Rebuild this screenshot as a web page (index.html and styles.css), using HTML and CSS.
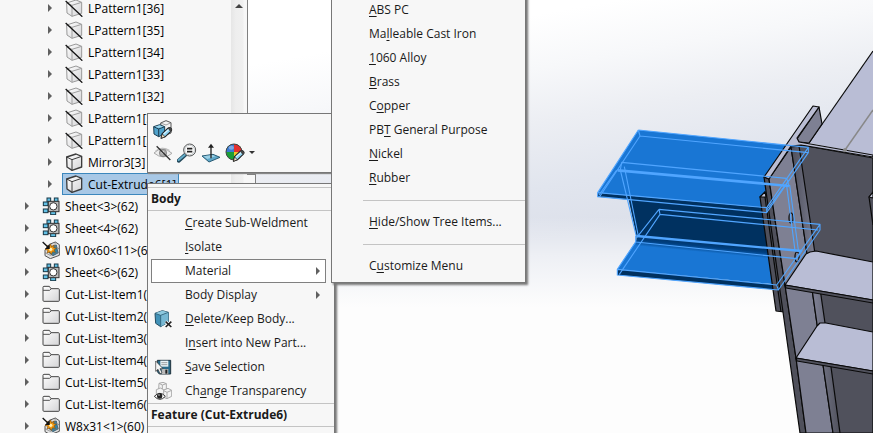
FILE: index.html
```html
<!DOCTYPE html>
<html lang="en">
<head>
<meta charset="utf-8">
<title>Cut-Extrude6 - Feature Tree</title>
<link rel="stylesheet" href="styles.css">
</head>
<body>
<svg class="defs" aria-hidden="true">
  <defs>
    <linearGradient id="steel" x1="0" y1="0" x2="1" y2="1"><stop offset="0" stop-color="#fff"/><stop offset="1" stop-color="#d4d4d6"/></linearGradient>
    <linearGradient id="fillet" x1="0" x2="1" y1="0" y2="0"><stop offset="0" stop-color="#4d4e5a"/><stop offset=".5" stop-color="#7b7d90"/><stop offset="1" stop-color="#50515c"/></linearGradient>
    <linearGradient id="bend" gradientUnits="userSpaceOnUse" x1="350" y1="605" x2="347" y2="636"><stop offset="0" stop-color="#003263"/><stop offset=".45" stop-color="#003f80"/><stop offset="1" stop-color="#1976d4"/></linearGradient>
    <symbol id="arrow" viewBox="0 0 4 8"><path d="M0 0L4 4L0 8Z" fill="#606060"/></symbol>
    <symbol id="cube-off" viewBox="0 0 54 54">
      <path d="M5 12L33 3L50 10V43L21 52L6 42Z" fill="url(#steel)" stroke="#999" stroke-width="3" stroke-linejoin="round"/>
      <path d="M5 12L21 19L50 10M21 19V52" fill="none" stroke="#a0a0a0" stroke-width="3"/>
      <path d="M2 6L52 53" stroke="#111" stroke-width="4"/>
    </symbol>
    <symbol id="cube" viewBox="0 0 54 54">
      <path d="M5 12L33 3L50 10V42L21 52L6 42Z" fill="url(#steel)" stroke="#3c3c3c" stroke-width="4" stroke-linejoin="round"/>
      <path d="M5 12L21 20L50 10M21 20V52" fill="none" stroke="#3c3c3c" stroke-width="3"/>
    </symbol>
    <symbol id="sheet" viewBox="0 0 54 54">
      <g fill="#63c1e6" stroke="#163746" stroke-width="3"><rect x="15" y="3" width="11" height="12"/><rect x="37" y="3" width="11" height="12"/><rect x="4" y="15" width="14" height="11"/><rect x="4" y="36" width="14" height="11"/><rect x="26" y="43" width="15" height="10"/></g>
      <rect x="19" y="13" width="32" height="31" fill="#bcbcbc" stroke="#333" stroke-width="3"/>
      <circle cx="34" cy="28" r="11" fill="#fff" stroke="#333" stroke-width="3"/>
    </symbol>
    <symbol id="weld" viewBox="0 0 54 54">
      <path d="M22 10L40 3L52 11V43L25 53L9 44V27Z" fill="#e2e2e2" stroke="#555" stroke-width="3" stroke-linejoin="round"/>
      <path d="M27 17L43 12L48 36L33 44L22 36Z" fill="#2f83a8" stroke="#29495a" stroke-width="2"/>
      <path d="M40 3L38 16L52 24M9 35L25 43L52 33" fill="none" stroke="#777" stroke-width="2"/>
      <path d="M26 9L29 17L36 12L35 20L43 22L36 27L40 34L32 32L28 40L23 33L15 36L18 28L9 25L17 21L14 13L22 17Z" fill="#f39a13" stroke="#88520a" stroke-width="2"/>
      <circle cx="26" cy="25" r="5" fill="#fff0b5"/>
      <path d="M2 3L20 20" stroke="#111" stroke-width="4"/><path d="M23 10V24H9Z" fill="#111"/>
    </symbol>
    <symbol id="folder" viewBox="0 0 54 54">
      <path d="M3 7Q3 4 6 4H22L27 11H49Q52 11 52 14V47Q52 49 49 49H6Q3 49 3 46Z" fill="url(#steel)" stroke="#444" stroke-width="3"/>
      <path d="M3 16H23L28 11" fill="none" stroke="#555" stroke-width="3"/>
    </symbol>
    <symbol id="pencil" viewBox="0 0 36 36">
      <path d="M4 33L7 20L23 5Q28 1 32 6Q35 10 31 14L15 29Z" fill="#8ed2f1" stroke="#222" stroke-width="3" stroke-linejoin="round"/>
      <path d="M22 6L30 15L34 9L28 2Z" fill="#444"/><path d="M4 33L7 21L15 29Z" fill="#f5e4c8" stroke="#222" stroke-width="2"/><path d="M11 21L25 9" stroke="#e5f8ff" stroke-width="3"/>
    </symbol>
    <symbol id="edit-feature" viewBox="0 0 60 60">
      <path d="M23 9L39 2L54 8V39L39 45L25 37Z" fill="#f4f4f4" stroke="#555" stroke-width="3"/><path d="M23 9L39 15L54 8" fill="none" stroke="#777" stroke-width="2"/>
      <path d="M2 20L20 14L35 20V42L17 50L3 42Z" fill="#4fa2cb" stroke="#1d3d50" stroke-width="3"/><path d="M2 20L17 27L35 20M17 27V50" fill="none" stroke="#1d3d50" stroke-width="3"/><path d="M6 20L20 16L31 20L17 24Z" fill="#9bd5ec"/>
      <use href="#pencil" x="20" y="18" width="39" height="41"/>
    </symbol>
    <symbol id="hide" viewBox="0 0 60 60">
      <path d="M3 30Q28 5 57 31Q31 53 3 30Z" fill="#eee" stroke="#aaa" stroke-width="3"/><path d="M7 24Q27 8 50 22" fill="none" stroke="#bbb" stroke-width="3"/><circle cx="30" cy="30" r="11" fill="#aaa" stroke="#777" stroke-width="2"/><circle cx="29" cy="28" r="4" fill="#eee"/><path d="M11 10L52 51" stroke="#303030" stroke-width="4"/>
    </symbol>
    <symbol id="zoom-to" viewBox="0 0 60 60">
      <path d="M5 53L24 36" stroke="#24495b" stroke-width="12" stroke-linecap="round"/><path d="M5 51L23 36" stroke="#64adca" stroke-width="6" stroke-linecap="round"/><circle cx="38" cy="21" r="18" fill="#eaf2f6" stroke="#555" stroke-width="3"/><circle cx="38" cy="21" r="14" fill="#fff" stroke="#bbb" stroke-width="2"/><path d="M30 17H46M30 26H46" stroke="#222" stroke-width="5"/>
    </symbol>
    <symbol id="normal-to" viewBox="0 0 60 60">
      <path d="M3 39L36 34L57 43L24 57Z" fill="#5fa8ca" stroke="#285a72" stroke-width="3"/><path d="M7 40L35 36L44 40L19 48Z" fill="#9cd0e5"/><path d="M30 46V10" stroke="#222" stroke-width="4"/><path d="M21 14L30 2L39 14Z" fill="#222"/>
    </symbol>
    <symbol id="appearance" viewBox="0 0 60 60">
      <circle cx="27" cy="27" r="24" fill="#1b9e37"/><path d="M27 27V3A24 24 0 0 1 51 27Z" fill="#e33030"/><path d="M27 27V3A24 24 0 0 0 3 27Z" fill="#397ad2"/><path d="M27 27H51A24 24 0 0 1 27 51Z" fill="#eec62a"/><circle cx="27" cy="27" r="24" fill="none" stroke="#444" stroke-width="3"/><ellipse cx="19" cy="14" rx="8" ry="6" fill="#fff" opacity=".35"/>
      <use href="#pencil" x="21" y="18" width="39" height="41"/>
    </symbol>
    <symbol id="delete-body" viewBox="0 0 54 54">
      <path d="M3 10L25 2L43 7V36L20 50L5 40Z" fill="#4292b8" stroke="#234d62" stroke-width="3"/><path d="M3 10L20 16L43 7L25 2Z" fill="#8ec9df"/><path d="M20 16L43 7V36L20 50Z" fill="#77b8d3"/><path d="M3 10L20 16L43 7M20 16V50" fill="none" stroke="#234d62" stroke-width="2"/><path d="M35 35L52 51M52 35L35 51" stroke="#fff" stroke-width="9"/><path d="M35 35L52 51M52 35L35 51" stroke="#222" stroke-width="5"/>
    </symbol>
    <symbol id="save-selection" viewBox="0 0 54 54">
      <path d="M10 7H50V48H16L10 41Z" fill="#286a89" stroke="#20333e" stroke-width="3"/><path d="M19 8H43V26H19Z" fill="#e9f4f8"/><path d="M22 14H40M22 20H40" stroke="#777" stroke-width="2"/><path d="M23 33H43V48H23Z" fill="#bbb"/><path d="M34 35H40V47H34Z" fill="#222"/><path d="M5 9V40L12 34L18 47L24 44L18 32H27Z" fill="#f5f5f5" stroke="#333" stroke-width="2"/>
    </symbol>
    <symbol id="transparency" viewBox="0 0 54 54">
      <g fill="#f4f4f4" stroke="#aaa" stroke-width="3"><path d="M15 4L27 1L37 5V22L25 27L14 22Z"/><path d="M15 4L25 9L37 5M25 9V27" fill="none"/><path d="M27 25L42 19L53 25V43L39 50L27 45Z"/><path d="M27 25L39 31L53 25M39 31V50" fill="none"/><path d="M7 23L19 18L29 23V38L18 43L7 37Z"/></g><path d="M1 43Q18 25 34 43Q18 61 1 43Z" fill="#fff" stroke="#333" stroke-width="3"/><circle cx="17" cy="42" r="8" fill="#222"/><circle cx="15" cy="39" r="2" fill="#fff"/>
    </symbol>
  </defs>
</svg>
<main class="workspace">
  <aside class="sidebar">
    <ul class="tree">
      <li class="row child"><svg class="arrow"><use href="#arrow"/></svg><button class="node"><svg><use href="#cube-off"/></svg>LPattern1[36]</button></li>
      <li class="row child"><svg class="arrow"><use href="#arrow"/></svg><button class="node"><svg><use href="#cube-off"/></svg>LPattern1[35]</button></li>
      <li class="row child"><svg class="arrow"><use href="#arrow"/></svg><button class="node"><svg><use href="#cube-off"/></svg>LPattern1[34]</button></li>
      <li class="row child"><svg class="arrow"><use href="#arrow"/></svg><button class="node"><svg><use href="#cube-off"/></svg>LPattern1[33]</button></li>
      <li class="row child"><svg class="arrow"><use href="#arrow"/></svg><button class="node"><svg><use href="#cube-off"/></svg>LPattern1[32]</button></li>
      <li class="row child"><svg class="arrow"><use href="#arrow"/></svg><button class="node"><svg><use href="#cube-off"/></svg>LPattern1[31]</button></li>
      <li class="row child"><svg class="arrow"><use href="#arrow"/></svg><button class="node"><svg><use href="#cube-off"/></svg>LPattern1[30]</button></li>
      <li class="row child"><svg class="arrow"><use href="#arrow"/></svg><button class="node"><svg><use href="#cube"/></svg>Mirror3[3]</button></li>
      <li class="row child"><svg class="arrow"><use href="#arrow"/></svg><button class="node selected"><svg><use href="#cube"/></svg>Cut-Extrude6[1]</button></li>
      <li class="row"><svg class="arrow"><use href="#arrow"/></svg><button class="node"><svg><use href="#sheet"/></svg>Sheet&lt;3&gt;(62)</button></li>
      <li class="row"><svg class="arrow"><use href="#arrow"/></svg><button class="node"><svg><use href="#sheet"/></svg>Sheet&lt;4&gt;(62)</button></li>
      <li class="row"><svg class="arrow"><use href="#arrow"/></svg><button class="node"><svg><use href="#weld"/></svg>W10x60&lt;11&gt;(62)</button></li>
      <li class="row"><svg class="arrow"><use href="#arrow"/></svg><button class="node"><svg><use href="#sheet"/></svg>Sheet&lt;6&gt;(62)</button></li>
      <li class="row"><svg class="arrow"><use href="#arrow"/></svg><button class="node"><svg><use href="#folder"/></svg>Cut-List-Item1(6)</button></li>
      <li class="row"><svg class="arrow"><use href="#arrow"/></svg><button class="node"><svg><use href="#folder"/></svg>Cut-List-Item2(6)</button></li>
      <li class="row"><svg class="arrow"><use href="#arrow"/></svg><button class="node"><svg><use href="#folder"/></svg>Cut-List-Item3(6)</button></li>
      <li class="row"><svg class="arrow"><use href="#arrow"/></svg><button class="node"><svg><use href="#folder"/></svg>Cut-List-Item4(1)</button></li>
      <li class="row"><svg class="arrow"><use href="#arrow"/></svg><button class="node"><svg><use href="#folder"/></svg>Cut-List-Item5(1)</button></li>
      <li class="row"><svg class="arrow"><use href="#arrow"/></svg><button class="node"><svg><use href="#folder"/></svg>Cut-List-Item6(1)</button></li>
      <li class="row"><svg class="arrow"><use href="#arrow"/></svg><button class="node"><svg><use href="#weld"/></svg>W8x31&lt;1&gt;(60)</button></li>
    </ul>
    <div class="scrollbar"><svg viewBox="0 0 8 4"><path d="M0 4L4 0L8 4Z" fill="#444"/></svg></div>
  </aside>
  <section class="viewport" aria-label="Model view">
    <svg class="model" viewBox="248 0 625 433" preserveAspectRatio="xMaxYMin slice">
      <g transform="translate(585 40) scale(.33333)">
        <path d="M130 475L560 510V640L155 592Z" fill="#003160"/>
        <path d="M160 270L670 322L545 503L38 458Z" fill="#1976d4"/>
        <path d="M38 458L545 503V518L38 470Z" fill="#003160"/>
        <path d="M155 600L560 640L590 735L97 688Z" fill="#1976d4"/>
        <path d="M155 588L600 628V660L152 618Z" fill="url(#bend)"/>
        <path d="M97 688L590 736V751L97 705Z" fill="#003160"/>
      </g>
      <g stroke="#090909" stroke-width="1.2" stroke-linejoin="round">
        <path d="M873 51L809 143L873 155Z" fill="#b9bdd5" stroke="none"/>
        <path d="M873 51L809 143" fill="none"/>
        <path d="M873 110L845 150" fill="none" stroke="#888" stroke-width="1.5"/>
        <path d="M795 145L801 145L873 158V433H820Z" fill="#50515c"/>
        <path d="M760 197L765 192L770 200L784 312L776 311Z" fill="#4f505b"/>
        <path d="M760 197L765 192L766 197Z" fill="#c5c8dc"/>
        <path d="M765 197L781 312" fill="none"/>
        <path d="M764 177L769 179L777 233L785 285L796 358L806 433H800L783 312Z" fill="#4f505b"/>
        <path d="M769 179L791 147L805 240L817 324L833 433H806L796 358L785 285L777 233Z" fill="#7e8093"/>
        <path d="M791 147L799 146L813 240L825 323L840 433H833L817 324L805 240Z" fill="url(#fillet)"/>
        <path d="M797 139L819 107L822 124L809 143L799 142Z" fill="#7e8093"/>
        <path d="M813 106L819 107L797 138L799 142L873 155V157L801 145L791 146L769 179L764 177Z" fill="#babdd3"/>
        <circle cx="845" cy="150" r="2" fill="#888" stroke="none"/>
        <path d="M873 225L869 197L873 192" fill="#50515c"/><path d="M869 197L873 192V198Z" fill="#c5c8dc"/>
        <path d="M785 285L806 254L810 252L816 251L873 262V300Z" fill="#b9bdd5"/>
        <path d="M785 285L873 300V303L786 288Z" fill="#50515c"/>
        <path d="M796 358L817 326L820 323L826 323L873 332V371Z" fill="#b9bdd5"/>
        <path d="M796 358L873 371V374L797 361Z" fill="#50515c"/>
        <ellipse cx="791" cy="218" rx="2" ry="5" fill="none"/><ellipse cx="797" cy="257" rx="2" ry="5" fill="none"/>
      </g>
      <g transform="translate(585 40) scale(.33333)" fill="none" stroke="#50a5ff" stroke-width="3.3" stroke-linejoin="round">
        <path d="M160 270L670 322V338L545 518V503L670 322M160 270L38 458V470L545 518M38 458L545 503M160 270L165 288L670 338M165 288L44 470"/>
        <path d="M110 367L605 415M110 367L106 390L154 590M118 380L160 588M95 390L42 465M612 420L545 510"/>
        <path d="M98 391L612 438" stroke-width="8"/>
        <path d="M605 437L630 632M614 435L640 630M605 415L612 437"/>
        <path d="M222 508L705 553V570L580 750L575 735L705 553M222 508L225 523L700 570M222 508L155 593M152 606L97 688V705L580 750M225 523L103 703M97 688L575 735"/>
        <path d="M155 588L650 633" stroke-width="7"/>
        <path d="M152 588V606L635 656L652 630"/>
      </g>
    </svg>
    <div class="pane-edge"></div>
  </section>
</main>
<div class="toolbar" role="toolbar">
  <div class="tools"><button aria-label="Edit feature"><svg><use href="#edit-feature"/></svg></button></div>
  <div class="tools">
    <button aria-label="Hide"><svg><use href="#hide"/></svg></button>
    <button aria-label="Zoom to selection"><svg><use href="#zoom-to"/></svg></button>
    <button aria-label="Normal to"><svg><use href="#normal-to"/></svg></button>
    <button aria-label="Appearances"><svg><use href="#appearance"/></svg><svg class="caret" viewBox="0 0 6 3"><path d="M0 0H6L3 3Z" fill="#333"/></svg></button>
  </div>
</div>
<nav class="menu context" aria-label="Body menu">
  <h2>Body</h2>
  <button class="item"><span class="icon"></span><span class="label"><u>C</u>reate Sub-Weldment</span></button>
  <button class="item"><span class="icon"></span><span class="label"><u>I</u>solate</span></button>
  <button class="item active"><span class="icon"></span><span class="label">Material</span><svg class="arrow"><use href="#arrow"/></svg></button>
  <button class="item"><span class="icon"></span><span class="label">Body Display</span><svg class="arrow"><use href="#arrow"/></svg></button>
  <button class="item"><svg class="icon"><use href="#delete-body"/></svg><span class="label"><u>D</u>elete/Keep Body...</span></button>
  <button class="item"><span class="icon"></span><span class="label">I<u>n</u>sert into New Part...</span></button>
  <button class="item"><svg class="icon"><use href="#save-selection"/></svg><span class="label"><u>S</u>ave Selection</span></button>
  <button class="item"><svg class="icon"><use href="#transparency"/></svg><span class="label">Ch<u>a</u>nge Transparency</span></button>
  <h2>Feature (Cut-Extrude6)</h2>
</nav>
<nav class="menu materials" aria-label="Material">
  <button class="item"><span class="label"><u>A</u>BS PC</span></button>
  <button class="item"><span class="label">Ma<u>l</u>leable Cast Iron</span></button>
  <button class="item"><span class="label"><u>1</u>060 Alloy</span></button>
  <button class="item"><span class="label"><u>B</u>rass</span></button>
  <button class="item"><span class="label">C<u>o</u>pper</span></button>
  <button class="item"><span class="label">PB<u>T</u> General Purpose</span></button>
  <button class="item"><span class="label"><u>N</u>ickel</span></button>
  <button class="item"><span class="label"><u>R</u>ubber</span></button>
  <hr>
  <button class="item"><span class="label"><u>H</u>ide/Show Tree Items...</span></button>
  <hr>
  <button class="item"><span class="label">C<u>u</u>stomize Menu</span></button>
</nav>
</body>
</html>
```
FILE: styles.css
```css
* { box-sizing: border-box; }
body {
  margin: 0;
  height: 100vh;
  overflow: hidden;
  font-family: "Open Sans", "Noto Sans", sans-serif;
  font-size: 12px;
  color: #1a1a1a;
  background: #fff;
}
button {
  margin: 0;
  padding: 0;
  border: 0;
  background: none;
  font: inherit;
  color: inherit;
  text-align: left;
  white-space: nowrap;
}
.defs { position: absolute; width: 0; height: 0; }
.workspace { display: flex; height: 100%; }

.sidebar {
  display: flex;
  flex: 0 0 248px;
  overflow: hidden;
  background: #f7f7f7;
  border-right: 1px solid #808080;
}
.tree {
  flex: 1;
  min-width: 0;
  margin: -3px 0 0;
  padding: 0;
  list-style: none;
  color: #000;
}
.row {
  display: flex;
  align-items: center;
  gap: 10px;
  height: 22px;
  padding-left: 25px;
}
.row.child { padding-left: 48px; }
.arrow { flex: none; width: 4px; height: 8px; }
.node {
  display: flex;
  align-items: center;
  gap: 5px;
  height: 22px;
  padding: 0 2px;
  border: 1px solid transparent;
}
.node svg { flex: none; width: 18px; height: 18px; }
.node.selected { background: #a8c8e6; border-color: #3c87bd; }
.scrollbar {
  flex: 0 0 15px;
  padding: 4px 4px;
  background: linear-gradient(to right, #e6e6e6, #eee 5px, #f0f0f0 12px, #f7f7f7 13px);
}
.scrollbar svg { display: block; width: 8px; height: 4px; }

.viewport {
  position: relative;
  flex: 1;
  min-width: 0;
  background:
    linear-gradient(to bottom, transparent 50%, rgba(255, 255, 255, 0.5) 59%, #fdfdfd 71%),
    linear-gradient(170deg, #fff 12%, #f7f8fa 22%, #eceef3 32%, #e1e5ee 44%, #dce0ea 54%);
}
.model { display: block; width: 100%; height: 100%; }
.pane-edge {
  position: absolute;
  left: -1px;
  top: 174px;
  bottom: 0;
  width: 9px;
  background: #f7f7f7;
  border: 1px solid #808080;
  border-width: 1px 1px 0 0;
}

.toolbar {
  position: absolute;
  left: 147px;
  top: 113px;
  width: 188px;
  padding: 4px 4px 8px;
  background: #f7f7f7;
  border: 1px solid #777;
  box-shadow: 1px 1px 1px #888;
}
.tools { display: flex; gap: 2px; height: 23px; align-items: center; }
.tools button { display: flex; align-items: center; gap: 4px; padding: 0 1px; }
.tools svg { width: 20px; height: 20px; }
.tools .caret { width: 6px; height: 3px; }

.menu {
  position: absolute;
  background: #f7f7f7;
  border: 1px solid #777;
  box-shadow: 2px 2px 2px #777;
}
.context {
  display: flex;
  flex-direction: column;
  left: 147px;
  top: 183px;
  width: 188px;
  height: 270px;
  padding-top: 3px;
}
.context > * { flex: none; }
.menu h2 {
  margin: 0;
  padding-left: 3px;
  height: 24px;
  font-size: 12px;
  line-height: 22px;
  border: 1px solid #c4c4c4;
  border-width: 1px 0;
}
.item { display: flex; align-items: center; width: 100%; height: 24px; }
.context .item { padding: 0 14px 0 6px; }
.icon { flex: none; width: 18px; height: 18px; margin-right: 13px; }
.label { flex: 1; padding-bottom: 2px; }
.context .item.active {
  width: auto;
  margin: 0 8px 0 3px;
  padding: 0 5px 0 2px;
  border: 1px solid #808080;
  background: #fff;
}
.materials { left: 331px; top: -4px; width: 195px; padding: 1px 0 4px; }
.materials .item { padding-left: 37px; }
.materials hr {
  height: 1px;
  margin: 10px 0 9px 31px;
  border: 0;
  background: #c4c4c4;
}
u { text-underline-offset: 2px; text-decoration-thickness: 1px; }
```
